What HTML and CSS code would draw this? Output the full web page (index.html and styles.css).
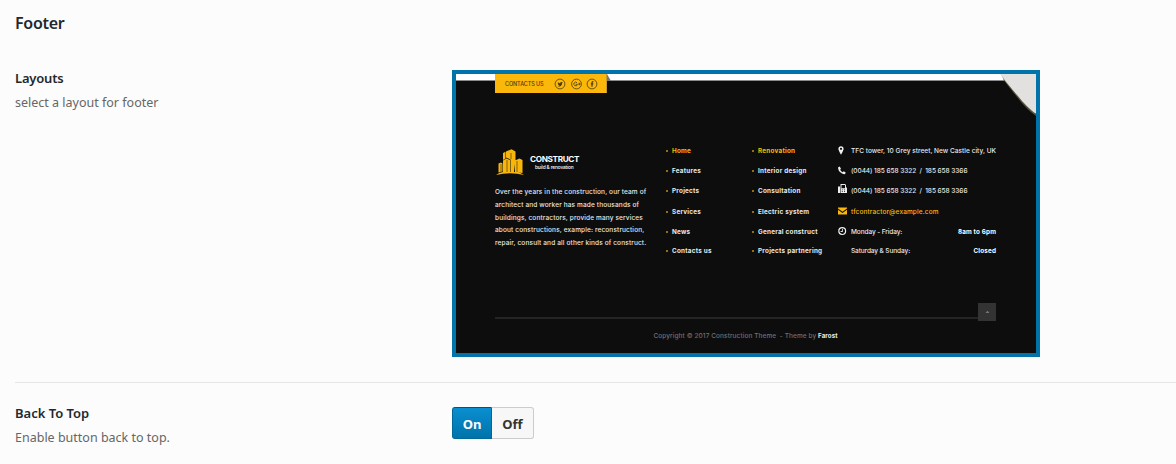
FILE: index.html
```html
<!DOCTYPE html>
<html lang="en">
<head>
<meta charset="utf-8">
<title>Footer options</title>
<link rel="stylesheet" href="styles.css">
</head>
<body>
<h2 class="heading">Footer</h2>
<section class="option layouts">
  <div class="label"><h3>Layouts</h3><p class="desc-layout">select a layout for footer</p></div>
  <div class="preview">
    <div class="strip"></div>
    <svg class="fold" width="38" height="44" viewBox="0 0 38 44"><path d="M3 0H38V42L36 40.500Q31 37 23 28Q12 14.500 6 6.500Z" fill="#55523a"/><path d="M2 0H38V39.500L36 38.500Q31 34.500 24 27Q13 14 7 6.500Z" fill="#e3e0e0"/></svg>
    <div class="tab"><span>CONTACTS US</span>
      <svg width="44" height="12" viewBox="0 0 44 12" fill="none" stroke="#4b3b10" stroke-width=".8"><circle cx="6" cy="6" r="4.900"/><circle cx="22.500" cy="6" r="4.900"/><circle cx="38" cy="6" r="4.900"/><path d="M3.500 7.900Q5 8 5.600 7.300Q4 7 4 5.900Q3.500 5 4 4.200Q5 5.400 6.200 5.300Q6.300 3.800 7.400 3.900L8.700 4.300L8.100 5.300Q7.700 8.500 5 8.500Z" fill="#4b3b10" stroke="none"/><path d="M23 4.800A1.800 1.800 0 1 0 23.400 6.300H21.600M24.200 6H26.600M25.400 4.800V7.200"/><path d="M39.400 3.700H38.800Q38 3.700 38 4.700V8.800M36.900 5.900H39.300" stroke-width="1.200"/></svg>
    </div>
    <div class="columns">
      <div class="about">
        <div class="brand">
          <svg width="29" height="29" viewBox="0 0 29 29"><path fill="#f8b60c" d="M1 28Q4 25.500 8 25H21Q26 25.500 29 28Q15 24.500 1 28ZM3.500 16.500L6 15.500L7.500 16.500V24.500L3.500 25.500ZM8 6L10.500 4.800V11.500L8 13ZM8 13.500L11.500 11.500L15 13V25H8ZM11 4.500L16.500 2.200L20.500 4.500V13L19 25H15.500V12.500L11 10.500ZM20 13.500L24.500 11.500L27.500 13V26L20 25Z"/><path d="M6 17V25M12 13V25M16 6V12M22 14V25" stroke="#0d0d0d" stroke-width=".5"/></svg>
          <div class="wordmark"><b>CONSTRUCT</b><small>build &amp; renovation</small></div>
        </div>
        <p>Over the years in the construction, our team of<br>architect and worker has made thousands of<br>buildings, contractors, provide many services<br>about constructions, example: reconstruction,<br>repair, consult and all other kinds of construct.</p>
      </div>
      <ul class="links"><li class="active">Home</li><li>Features</li><li>Projects</li><li>Services</li><li>News</li><li>Contacts us</li></ul>
      <ul class="links"><li class="active">Renovation</li><li>Interior design</li><li>Consultation</li><li>Electric system</li><li>General construct</li><li>Projects partnering</li></ul>
      <ul class="contact">
        <li><svg viewBox="0 0 10 10"><path fill-rule="evenodd" d="M3 .3A2.600 2.600 0 0 1 5.600 2.900Q5.600 4 3 8.700Q.4 4 .4 2.900A2.600 2.600 0 0 1 3 .3ZM3 1.700A1.100 1.100 0 1 0 3 3.900A1.100 1.100 0 1 0 3 1.700Z"/></svg><span class="addr">TFC tower, 10 Grey street, New Castle city, UK</span></li>
        <li><svg viewBox="0 0 10 10"><path d="M.2 1.300L1.700 .5L3 2.700L2.100 3.700Q3.100 5.500 4.700 6.200L5.700 5.300L7.700 6.600L7.100 8.100Q5.200 8.700 2.900 6.800Q-.5 3.900 .2 1.300Z"/></svg><span class="phone">(0044) 185 658 3322 &nbsp;/&nbsp; 185 658 3366</span></li>
        <li><svg class="fax" viewBox="0 0 10 10"><path fill-rule="evenodd" d="M0 2.500H2V9H0ZM2.500 0H7L8 1V3.500H9V9H2.500ZM3.500 1V4.200H7V1ZM3.800 5.500V6.200H4.800V5.500ZM6 5.500V6.200H7V5.500ZM3.800 7V7.700H4.800V7ZM6 7V7.700H7V7Z"/></svg><span class="phone">(0044) 185 658 3322 &nbsp;/&nbsp; 185 658 3366</span></li>
        <li class="active"><svg viewBox="0 0 10 10"><path d="M0 .5H9V1.500L4.500 4.700L0 1.500ZM0 2.700L4.500 5.900L9 2.700V7.500H0Z"/></svg><span class="mail">tfcontractor@example.com</span></li>
        <li><svg viewBox="0 0 10 10"><circle cx="4.200" cy="4.100" r="3.400" fill="none" stroke="#eee" stroke-width="1.200"/><path d="M4 1.800H4.800V4.900H2.600V4.100H4Z"/></svg><span class="days">Monday - Friday:</span><b>8am to 6pm</b></li>
        <li><svg viewBox="0 0 10 10"></svg><span class="days">Saturday &amp; Sunday:</span><b>Closed</b></li>
      </ul>
    </div>
    <div class="rule"><div class="line"></div><div class="up"><svg width="5" height="4" viewBox="0 0 5 4"><path d="M.5 3L2.500 .8L4.500 3Z" fill="#777"/></svg></div></div>
    <div class="copy">Copyright © 2017 Construction Theme &nbsp;- Theme by <b>Farost</b></div>
  </div>
</section>
<section class="option back">
  <div class="label"><h3 class="back-title">Back To Top</h3><p class="desc-back">Enable button back to top.</p></div>
  <div class="switch"><span class="on">On</span><span class="off">Off</span></div>
</section>
</body>
</html>
```
FILE: styles.css
```css
* { box-sizing: border-box; }
body { margin: 0; height: 464px; overflow: hidden; background: #fcfcfc; font-family: "Noto Sans", "Open Sans", sans-serif; color: #23282d; }
h2, h3, p, ul { margin: 0; padding: 0; }
ul { list-style: none; }
.heading { height: 70px; padding: 11px 15px 0; font-size: 16px; line-height: 24px; font-weight: 600; letter-spacing: -.28px; }
.option { display: flex; margin-left: 15px; }
.layouts { height: 313px; border-bottom: 1px solid #e5e5e5; }
.label { width: 437px; }
.label h3 { font-size: 13px; line-height: 18px; font-weight: 600; letter-spacing: -.2px; }
.label .back-title { letter-spacing: 0; }
.label p { margin-top: 6px; font-size: 12.5px; line-height: 20px; color: #666; }
.layouts .label { margin-top: -1px; }
.back { padding-top: 24px; }
.back .label { margin-top: -3px; }
.preview { position: relative; width: 588px; height: 287px; border: 4px solid #0073aa; background: #0d0d0d; color: #e9e9e9; font-family: Inter, sans-serif; font-size: 6.5px; font-weight: 500; white-space: nowrap; }
.strip { height: 7px; background: #fff; border-bottom: 1px solid #8b8b8b; }
.fold { position: absolute; right: 0; top: 0; }
.tab { position: absolute; left: 39px; top: 0; display: flex; align-items: center; justify-content: space-between; width: 112px; height: 19px; padding: 0 8px 0 10px; background: #fbb80a; color: #4b3b10; font-size: 5.5px; letter-spacing: -.1px; border-right: 1px solid #c59a30; }
.tab::after { content: ""; position: absolute; left: 112px; top: 0; width: 4px; height: 7px; background: #777; clip-path: polygon(0 0, 100% 100%, 0 100%); }
.columns { display: grid; grid-template-columns: 170px 86px 87px 158px; padding-left: 39px; margin-top: 60px; height: 148px; }
.about { padding-top: 6px; }
.brand { display: flex; height: 39px; gap: 6px; }
.wordmark { padding-top: 8px; color: #fff; }
.wordmark b { display: block; font-size: 8.2px; line-height: 9px; letter-spacing: -.35px; }
.wordmark small { display: block; font-size: 4.8px; line-height: 6px; padding-left: 5px; letter-spacing: -.15px; }
.about p { line-height: 12.8px; letter-spacing: .14px; }
.links, .contact { display: grid; grid-template-rows: 20px 19px 21px 21px 19px 20px; }
.links { font-weight: 700; font-size: 6.3px; letter-spacing: .26px; }
.links li { display: flex; align-items: center; }
.links li::before { content: ""; width: 2px; height: 2px; margin: 0 4px 0 1px; background: #c6920c; border-radius: 1px; }
.contact li { display: flex; align-items: center; }
.contact svg { width: 10px; height: 10px; margin-right: 3px; fill: #eee; }
.contact .fax { margin-top: -3px; }
.contact b { margin-left: auto; color: #fff; font-size: 6.3px; letter-spacing: .18px; }
.addr { letter-spacing: .04px; }
.phone { letter-spacing: -.05px; }
.mail { letter-spacing: .12px; }
.days { letter-spacing: -.1px; }
.preview .active { color: #fbb80a; }
.contact .active svg { fill: #fbb80a; }
.rule { display: flex; align-items: flex-start; height: 18px; margin: 14px 40px 0 39px; }
.line { flex: 1; height: 2px; margin-top: 14px; background: #242424; }
.up { width: 18px; height: 18px; display: grid; place-items: center; background: #333; }
.copy { margin-top: 10px; padding-right: 1px; text-align: center; line-height: 10px; color: #707070; font-size: 6.5px; letter-spacing: .08px; }
.copy b { color: #eee; font-size: 6.2px; }
.switch { display: flex; height: 32px; width: 82px; font-size: 13px; line-height: 33px; font-weight: 700; text-align: center; }
.on { width: 40px; color: #fff; background: linear-gradient(#0a8fd0, #0073aa); border: 1px solid #006799; border-top-color: #005580; border-radius: 3px 0 0 3px; }
.off { width: 42px; color: #333; background: #f7f7f7; border: 1px solid #ccc; border-left: 0; border-radius: 0 3px 3px 0; }
```
